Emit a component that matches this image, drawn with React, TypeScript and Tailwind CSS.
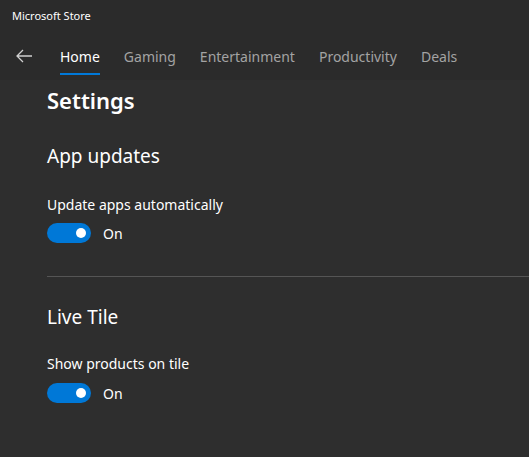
const tabs = ["Home", "Gaming", "Entertainment", "Productivity", "Deals"];

const Toggle = () => (
  <div className="flex items-center gap-3 h-5">
    <div className="w-11 h-5 rounded-full bg-[#0078d7] flex items-center justify-end pr-[5px]">
      <div className="w-[10px] h-[10px] rounded-full bg-white" />
    </div>
    <span className="text-[14px] text-white">On</span>
  </div>
);

export default function App() {
  return (
    <div
      className="w-[529px] h-[457px] bg-[#2e2e2e] overflow-hidden flex flex-col"
      style={{ fontFamily: '"Segoe UI", "Noto Sans", sans-serif' }}
    >
      {/* Title bar + nav */}
      <div className="bg-[#2b2b2b] h-20 flex flex-col">
        <div className="h-8 flex items-center pl-3 text-[11px] text-white">Microsoft Store</div>
        <div className="flex items-center h-12 pl-[15px]">
          <svg width="18" height="14" viewBox="0 0 18 14" className="mr-[27px]">
            <path d="M8 1 L2 7 L8 13 M2 7 H17" fill="none" stroke="#d0d0d0" strokeWidth="1.3" />
          </svg>
          <div className="flex gap-[24px] h-full">
            {tabs.map((t, i) => (
              <div key={t} className="relative flex items-center h-full">
                <span className={`text-[14px] ${i === 0 ? "text-white" : "text-[#a3a3a3]"}`}>{t}</span>
                {i === 0 && <div className="absolute left-0 right-0 bottom-[5px] h-[2px] bg-[#0078d7]" />}
              </div>
            ))}
          </div>
        </div>
      </div>

      {/* Content */}
      <div className="pl-[47px] flex flex-col text-white">
        <h1 className="text-[22px] font-semibold leading-8 mt-[4px]">Settings</h1>
        <h2 className="text-[19px] leading-7 mt-[26px]">App updates</h2>
        <p className="text-[14px] leading-5 mt-[25px]">Update apps automatically</p>
        <div className="mt-[8px]">
          <Toggle />
        </div>
        <div className="h-px bg-[#555555] mt-[33px]" />
        <h2 className="text-[19px] leading-7 mt-[26px]">Live Tile</h2>
        <p className="text-[14px] leading-5 mt-[23px]">Show products on tile</p>
        <div className="mt-[9px]">
          <Toggle />
        </div>
      </div>
    </div>
  );
}
